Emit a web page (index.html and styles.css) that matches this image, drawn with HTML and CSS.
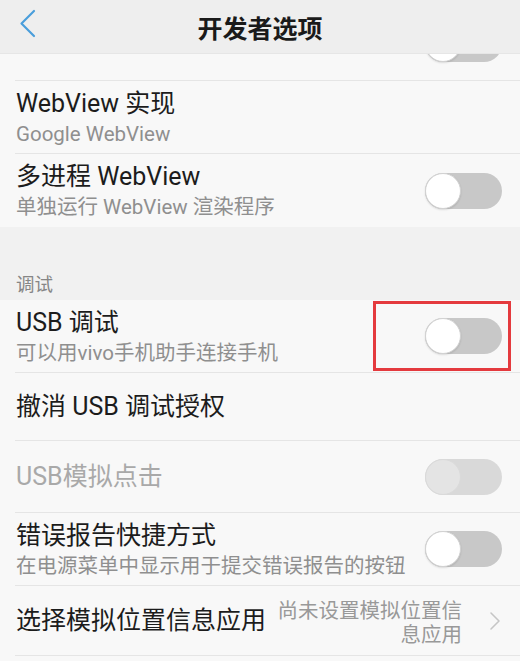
FILE: index.html
```html
<!DOCTYPE html>
<html lang="zh-CN">
<head>
<meta charset="utf-8">
<title>开发者选项</title>
<link rel="stylesheet" href="styles.css">
</head>
<body>
<div class="screen">
  <header class="topbar">
    <svg class="back" width="54" height="54" viewBox="0 0 54 54" aria-hidden="true">
      <path d="M34 11 L21.5 23.5 L34 36" fill="none" stroke="#4a9edb" stroke-width="2.2" stroke-linecap="round" stroke-linejoin="round"/>
    </svg>
    <h1 class="topbar-title">开发者选项</h1>
    <span class="topbar-spacer"></span>
  </header>

  <div class="list">
    <div class="clip">
      <div class="row row-two">
        <div class="text"></div>
        <span class="toggle"><span class="knob"></span></span>
      </div>
    </div>

    <div class="row row-two">
      <div class="text">
        <div class="title">WebView 实现</div>
        <div class="sub">Google WebView</div>
      </div>
    </div>

    <div class="row row-two row-last">
      <div class="text">
        <div class="title">多进程 WebView</div>
        <div class="sub">单独运行 WebView 渲染程序</div>
      </div>
      <span class="toggle"><span class="knob"></span></span>
    </div>

    <div class="section">调试</div>

    <div class="row row-two row-marked">
      <div class="text">
        <div class="title">USB 调试</div>
        <div class="sub">可以用vivo手机助手连接手机</div>
      </div>
      <span class="toggle"><span class="knob"></span></span>
      <span class="mark"></span>
    </div>

    <div class="row row-one row-h67">
      <div class="text">
        <div class="title">撤消 USB 调试授权</div>
      </div>
    </div>

    <div class="row row-one row-h71">
      <div class="text">
        <div class="title title-disabled">USB模拟点击</div>
      </div>
      <span class="toggle toggle-disabled"><span class="knob"></span></span>
    </div>

    <div class="row row-two">
      <div class="text">
        <div class="title">错误报告快捷方式</div>
        <div class="sub">在电源菜单中显示用于提交错误报告的按钮</div>
      </div>
      <span class="toggle"><span class="knob"></span></span>
    </div>

    <div class="row row-one row-h69">
      <div class="text">
        <div class="title">选择模拟位置信息应用</div>
      </div>
      <div class="value">尚未设置模拟位置信息应用</div>
      <svg class="chevron" width="14" height="20" viewBox="0 0 14 20" aria-hidden="true">
        <path d="M3 2 L11 10 L3 18" fill="none" stroke="#c6c6c6" stroke-width="1.6" stroke-linecap="round" stroke-linejoin="round"/>
      </svg>
    </div>
  </div>
</div>
</body>
</html>
```

FILE: styles.css
```css
html, body {
  margin: 0;
  padding: 0;
}

body {
  width: 520px;
  height: 661px;
  overflow: hidden;
  background: #f8f8f8;
  font-family: Roboto, "Noto Sans CJK SC", sans-serif;
  color: #1c1c1c;
}

.screen {
  display: flex;
  flex-direction: column;
  width: 520px;
}

.topbar {
  display: grid;
  grid-template-columns: 54px 1fr 54px;
  align-items: center;
  height: 54px;
  background: #eeeeee;
  border-bottom: 1px solid #e6e6e6;
  box-sizing: border-box;
}

.back {
  display: block;
}

.topbar-title {
  margin: 0;
  text-align: center;
  font-family: "Noto Sans CJK SC", sans-serif;
  font-size: 25px;
  font-weight: 700;
  line-height: 30px;
  color: #1a1a1a;
}

.list {
  display: flex;
  flex-direction: column;
}

.clip {
  height: 27px;
  overflow: hidden;
  display: flex;
  flex-direction: column;
  justify-content: flex-end;
}

.row {
  position: relative;
  display: flex;
  align-items: center;
  margin-left: 15px;
  padding: 0 18px 0 1px;
  border-bottom: 1px solid #e5e5e5;
  flex-shrink: 0;
}

.row-two {
  height: 72px;
}

.row-last {
  height: 73px;
  border-bottom: none;
}

.row-h67 { height: 67px; }
.row-h71 { height: 71px; }
.row-h69 { height: 69px; }

.text {
  flex: 1;
  display: flex;
  flex-direction: column;
  min-width: 0;
}

.row-two .text {
  align-self: flex-start;
  padding-top: 8px;
}

.title {
  font-size: 25px;
  line-height: 30px;
  color: #1c1c1c;
  white-space: nowrap;
}

.title-disabled {
  color: #a9a9a9;
}

.sub {
  margin-top: 2px;
  font-size: 20.5px;
  line-height: 26px;
  color: #8f8f8f;
  white-space: nowrap;
}

.section {
  height: 73px;
  box-sizing: border-box;
  display: flex;
  align-items: flex-end;
  padding: 0 0 5px 16px;
  background: #f1f1f1;
  font-family: "Noto Sans CJK SC", sans-serif;
  font-size: 18.5px;
  line-height: 24px;
  color: #868686;
}

.toggle {
  display: flex;
  align-items: center;
  width: 77px;
  height: 36px;
  border-radius: 18px;
  background: #c8c8c8;
  flex-shrink: 0;
}

.knob {
  width: 36px;
  height: 36px;
  box-sizing: border-box;
  border-radius: 50%;
  background: #ffffff;
  border: 1px solid #d2d2d2;
  box-shadow: 0 1px 2px rgba(0, 0, 0, 0.12);
}

.toggle-disabled {
  background: #d9d9d9;
}

.toggle-disabled .knob {
  background: #e4e4e4;
  border-color: #dadada;
  box-shadow: none;
}

.mark {
  position: absolute;
  left: 358px;
  top: 1px;
  width: 138px;
  height: 70px;
  box-sizing: border-box;
  border: 3px solid #e43a3e;
}

.value {
  width: 186px;
  margin-right: 26px;
  text-align: right;
  font-family: "Noto Sans CJK SC", sans-serif;
  font-size: 20.5px;
  line-height: 24px;
  color: #999999;
}

.chevron {
  display: block;
  flex-shrink: 0;
}
```
